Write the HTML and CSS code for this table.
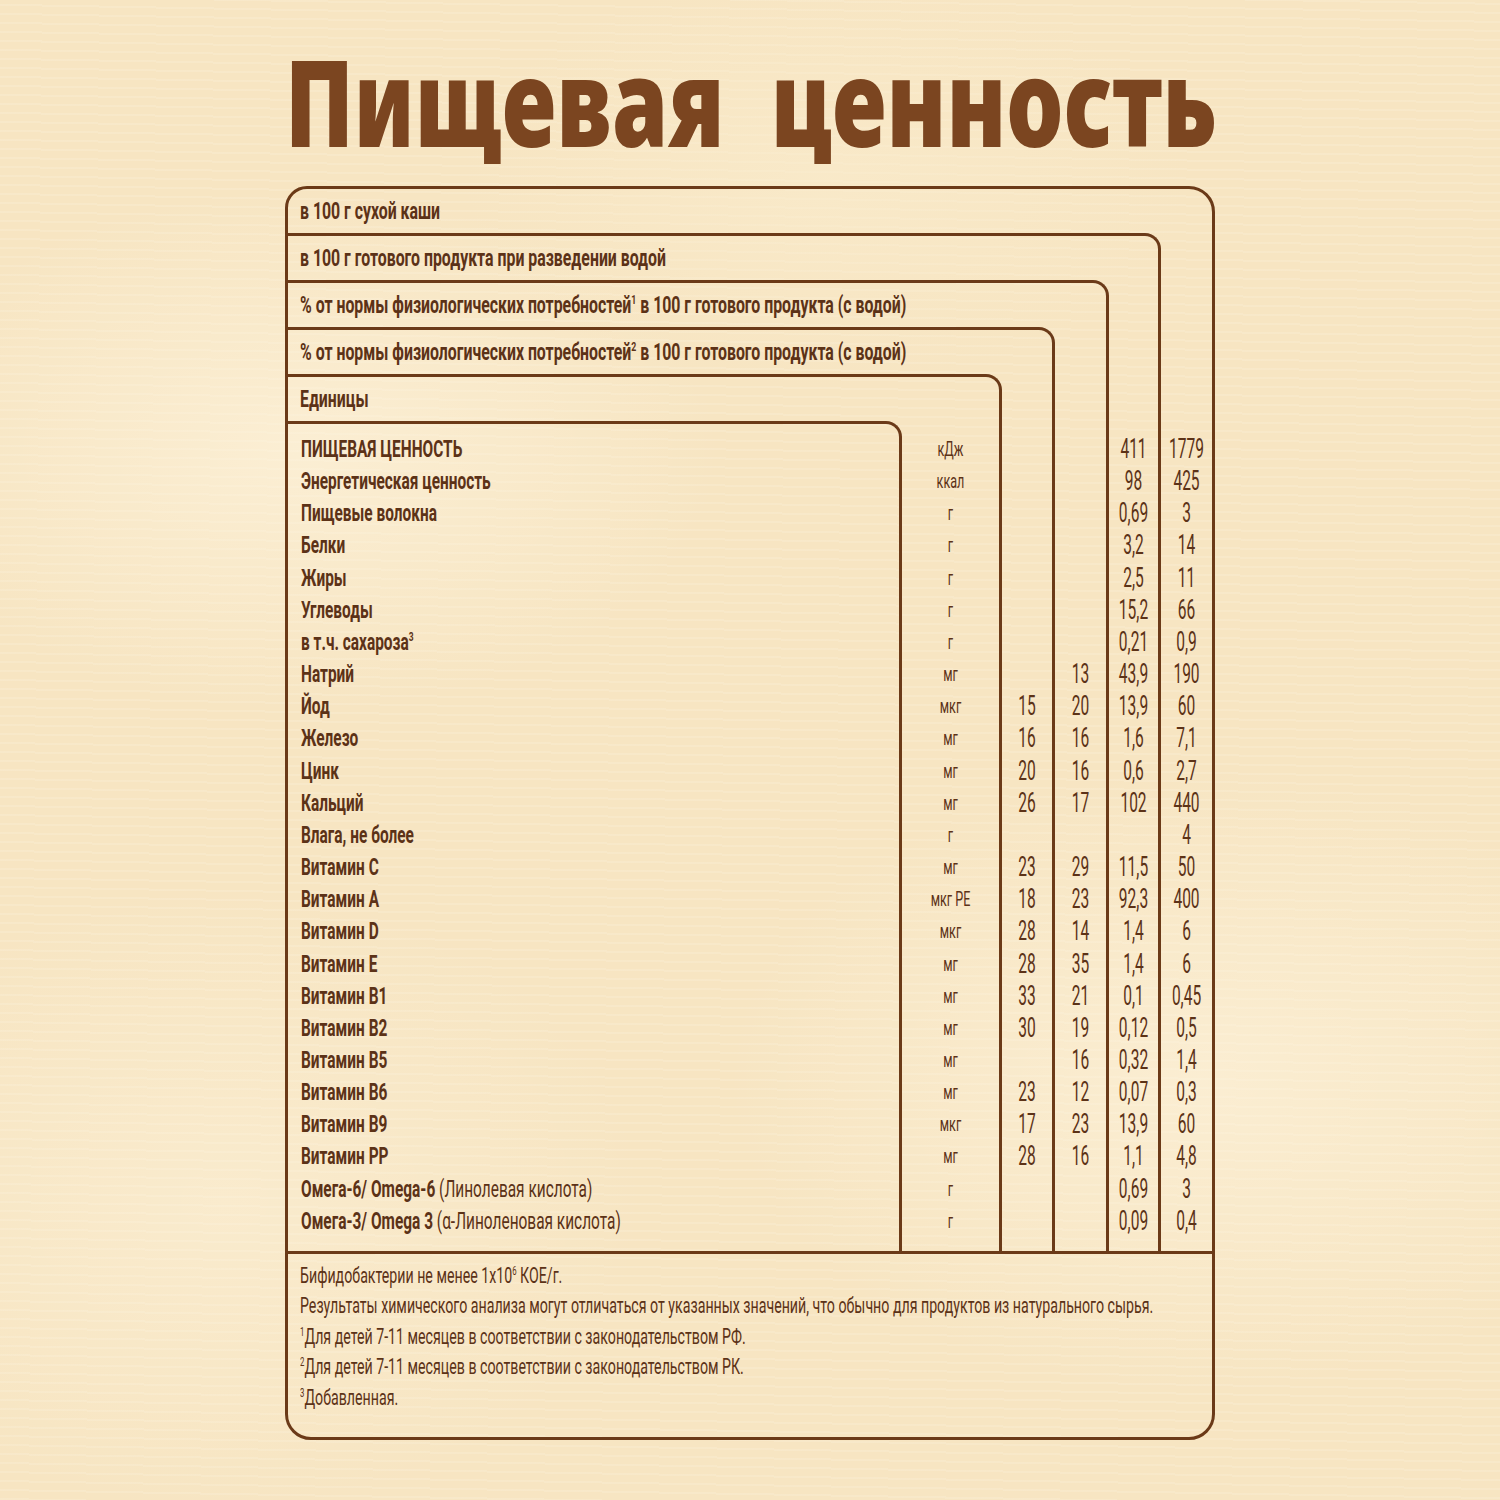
FILE: index.html
```html
<!DOCTYPE html>
<html lang="ru">
<head>
<meta charset="utf-8">
<title>Пищевая ценность</title>
<link rel="stylesheet" href="styles.css">
</head>
<body>
<div class="page">
  <h1 class="title"><span class="title-text">Пищевая ценность</span></h1>
  <div class="card">
    <div class="hd"><div class="sq">в 100 г сухой каши</div></div>
    <div class="bd">
      <div class="lvl">
        <div class="hd"><div class="sq">в 100 г готового продукта при разведении водой</div></div>
        <div class="bd">
          <div class="lvl">
            <div class="hd"><div class="sq">% от нормы физиологических потребностей<sup>1</sup> в 100 г готового продукта (с водой)</div></div>
            <div class="bd">
              <div class="lvl">
                <div class="hd"><div class="sq">% от нормы физиологических потребностей<sup>2</sup> в 100 г готового продукта (с водой)</div></div>
                <div class="bd">
                  <div class="lvl">
                    <div class="hd"><div class="sq">Единицы</div></div>
                    <div class="bd">
                      <div class="lvl labels">
                        <div class="sq">
                          <div class="r">ПИЩЕВАЯ ЦЕННОСТЬ</div>
                          <div class="r">Энергетическая ценность</div>
                          <div class="r">Пищевые волокна</div>
                          <div class="r">Белки</div>
                          <div class="r">Жиры</div>
                          <div class="r">Углеводы</div>
                          <div class="r">в т.ч. сахароза<sup>3</sup></div>
                          <div class="r">Натрий</div>
                          <div class="r">Йод</div>
                          <div class="r">Железо</div>
                          <div class="r">Цинк</div>
                          <div class="r">Кальций</div>
                          <div class="r">Влага, не более</div>
                          <div class="r">Витамин C</div>
                          <div class="r">Витамин A</div>
                          <div class="r">Витамин D</div>
                          <div class="r">Витамин E</div>
                          <div class="r">Витамин B1</div>
                          <div class="r">Витамин B2</div>
                          <div class="r">Витамин B5</div>
                          <div class="r">Витамин B6</div>
                          <div class="r">Витамин B9</div>
                          <div class="r">Витамин PP</div>
                          <div class="r">Омега-6/ Omega-6 <span class="lt">(Линолевая кислота)</span></div>
                          <div class="r">Омега-3/ Omega 3 <span class="lt">(α-Линоленовая кислота)</span></div>
                        </div>
                      </div>
                      <div class="col units">
                        <div class="sq">
                          <div class="r">кДж</div>
                          <div class="r">ккал</div>
                          <div class="r">г</div>
                          <div class="r">г</div>
                          <div class="r">г</div>
                          <div class="r">г</div>
                          <div class="r">г</div>
                          <div class="r">мг</div>
                          <div class="r">мкг</div>
                          <div class="r">мг</div>
                          <div class="r">мг</div>
                          <div class="r">мг</div>
                          <div class="r">г</div>
                          <div class="r">мг</div>
                          <div class="r">мкг РЕ</div>
                          <div class="r">мкг</div>
                          <div class="r">мг</div>
                          <div class="r">мг</div>
                          <div class="r">мг</div>
                          <div class="r">мг</div>
                          <div class="r">мг</div>
                          <div class="r">мкг</div>
                          <div class="r">мг</div>
                          <div class="r">г</div>
                          <div class="r">г</div>
                        </div>
                      </div>
                    </div>
                  </div>
                  <div class="col c-rk">
                    <div class="sq">
                      <div class="r"></div>
                      <div class="r"></div>
                      <div class="r"></div>
                      <div class="r"></div>
                      <div class="r"></div>
                      <div class="r"></div>
                      <div class="r"></div>
                      <div class="r"></div>
                      <div class="r">15</div>
                      <div class="r">16</div>
                      <div class="r">20</div>
                      <div class="r">26</div>
                      <div class="r"></div>
                      <div class="r">23</div>
                      <div class="r">18</div>
                      <div class="r">28</div>
                      <div class="r">28</div>
                      <div class="r">33</div>
                      <div class="r">30</div>
                      <div class="r"></div>
                      <div class="r">23</div>
                      <div class="r">17</div>
                      <div class="r">28</div>
                      <div class="r"></div>
                      <div class="r"></div>
                    </div>
                  </div>
                </div>
              </div>
              <div class="col c-rf">
                <div class="sq">
                  <div class="r"></div>
                  <div class="r"></div>
                  <div class="r"></div>
                  <div class="r"></div>
                  <div class="r"></div>
                  <div class="r"></div>
                  <div class="r"></div>
                  <div class="r">13</div>
                  <div class="r">20</div>
                  <div class="r">16</div>
                  <div class="r">16</div>
                  <div class="r">17</div>
                  <div class="r"></div>
                  <div class="r">29</div>
                  <div class="r">23</div>
                  <div class="r">14</div>
                  <div class="r">35</div>
                  <div class="r">21</div>
                  <div class="r">19</div>
                  <div class="r">16</div>
                  <div class="r">12</div>
                  <div class="r">23</div>
                  <div class="r">16</div>
                  <div class="r"></div>
                  <div class="r"></div>
                </div>
              </div>
            </div>
          </div>
          <div class="col c-ready">
            <div class="sq">
              <div class="r">411</div>
              <div class="r">98</div>
              <div class="r">0,69</div>
              <div class="r">3,2</div>
              <div class="r">2,5</div>
              <div class="r">15,2</div>
              <div class="r">0,21</div>
              <div class="r">43,9</div>
              <div class="r">13,9</div>
              <div class="r">1,6</div>
              <div class="r">0,6</div>
              <div class="r">102</div>
              <div class="r"></div>
              <div class="r">11,5</div>
              <div class="r">92,3</div>
              <div class="r">1,4</div>
              <div class="r">1,4</div>
              <div class="r">0,1</div>
              <div class="r">0,12</div>
              <div class="r">0,32</div>
              <div class="r">0,07</div>
              <div class="r">13,9</div>
              <div class="r">1,1</div>
              <div class="r">0,69</div>
              <div class="r">0,09</div>
            </div>
          </div>
        </div>
      </div>
      <div class="col c-dry">
        <div class="sq">
          <div class="r">1779</div>
          <div class="r">425</div>
          <div class="r">3</div>
          <div class="r">14</div>
          <div class="r">11</div>
          <div class="r">66</div>
          <div class="r">0,9</div>
          <div class="r">190</div>
          <div class="r">60</div>
          <div class="r">7,1</div>
          <div class="r">2,7</div>
          <div class="r">440</div>
          <div class="r">4</div>
          <div class="r">50</div>
          <div class="r">400</div>
          <div class="r">6</div>
          <div class="r">6</div>
          <div class="r">0,45</div>
          <div class="r">0,5</div>
          <div class="r">1,4</div>
          <div class="r">0,3</div>
          <div class="r">60</div>
          <div class="r">4,8</div>
          <div class="r">3</div>
          <div class="r">0,4</div>
        </div>
      </div>
    </div>
    <div class="notes">
      <div class="sq">
        <p>Бифидобактерии не менее 1x10<sup>6</sup> КОЕ/г.</p>
        <p>Результаты химического анализа могут отличаться от указанных значений, что обычно для продуктов из натурального сырья.</p>
        <p><sup>1</sup>Для детей 7-11 месяцев в соответствии с законодательством РФ.</p>
        <p><sup>2</sup>Для детей 7-11 месяцев в соответствии с законодательством РК.</p>
        <p><sup>3</sup>Добавленная.</p>
      </div>
    </div>
  </div>
</div>
</body>
</html>
```

FILE: styles.css
```css
html, body {
  margin: 0;
  padding: 0;
}

body {
  background-color: #f7e5c2;
  background-image:
    radial-gradient(ellipse 40% 25% at 20% 30%, rgba(255, 246, 226, 0.55), transparent 70%),
    radial-gradient(ellipse 45% 30% at 80% 72%, rgba(255, 246, 226, 0.5), transparent 70%),
    radial-gradient(ellipse 35% 20% at 55% 12%, rgba(250, 236, 205, 0.6), transparent 70%),
    radial-gradient(ellipse 40% 30% at 15% 80%, rgba(255, 246, 226, 0.35), transparent 70%),
    repeating-linear-gradient(1deg, rgba(255, 250, 238, 0.16) 0 2px, transparent 2px 9px);
  color: #5c3217;
  font-family: Roboto, "Noto Sans", sans-serif;
}

.page {
  width: 1500px;
  height: 1500px;
  padding: 0 285px;
  box-sizing: border-box;
  overflow: hidden;
}

/* title */
.title {
  margin: 0;
  height: 186px;
  padding-top: 39px;
  box-sizing: border-box;
  font-family: "Noto Sans", sans-serif;
  font-weight: 900;
  font-size: 120px;
  line-height: 124px;
  color: #7b4520;
  white-space: nowrap;
}

.title-text {
  display: inline-block;
  transform-origin: 0 0;
  transform: scaleX(0.754);
  word-spacing: 30px;
}

/* squeezed text wrapper (condensed look) */
.sq {
  --k: 0.66;
  width: calc(100% / var(--k));
  transform-origin: 0 0;
  transform: scaleX(var(--k));
  white-space: nowrap;
}

/* table */
.card {
  width: 930px;
  box-sizing: border-box;
  border: 3px solid #6b3a18;
  border-radius: 22px 26px 26px 26px;
  display: flex;
  flex-direction: column;
}

.hd {
  height: 44px;
  line-height: 45px;
  padding-left: 12px;
  font-weight: 700;
  font-size: 23px;
}

.hd .sq {
  --k: 0.689;
}

.bd {
  display: flex;
  flex: 1;
  min-width: 0;
}

.lvl {
  flex: 1;
  min-width: 0;
  display: flex;
  flex-direction: column;
  border-top: 3px solid #6b3a18;
  border-right: 3px solid #6b3a18;
  border-top-right-radius: 16px;
}

.labels {
  display: block;
  padding: 9px 0 14px 13px;
  font-weight: 700;
  font-size: 24px;
}

.labels .sq {
  --k: 0.643;
}

.r {
  height: 32.16px;
  line-height: 32.16px;
  white-space: nowrap;
}

.lt {
  font-weight: 400;
}

.col {
  flex: none;
  display: flex;
  flex-direction: column;
  justify-content: flex-end;
  padding: 0 0 14px;
  text-align: center;
  font-size: 27px;
  font-weight: 400;
}

.col .sq {
  --k: 0.575;
}

.units {
  width: 97px;
  font-size: 21px;
}

.units .sq {
  --k: 0.6;
}

.c-rk { width: 50px; }
.c-rf { width: 51px; }
.c-ready { width: 49px; }
.c-dry { width: 51px; }

sup {
  font-size: 0.55em;
  line-height: 0;
  vertical-align: 0.7em;
}

.notes {
  border-top: 3px solid #6b3a18;
  padding: 7px 0 24px 12px;
  font-size: 22px;
  line-height: 30.5px;
}

.notes .sq {
  --k: 0.645;
}

.notes p {
  margin: 0;
}
```
